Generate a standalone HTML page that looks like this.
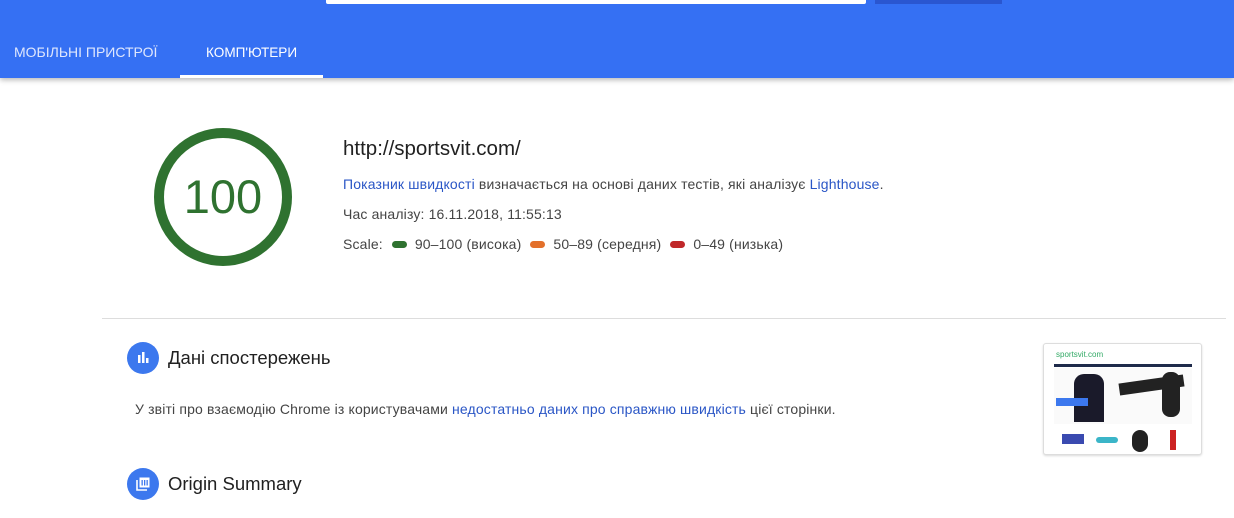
<!DOCTYPE html>
<html><head><meta charset="utf-8"><style>
body{margin:0;width:1234px;height:518px;overflow:hidden;background:#fff;font-family:"Liberation Sans",Arial,sans-serif;position:relative}
.hdr{position:absolute;left:0;top:0;width:1234px;height:78px;background:#3570f3;box-shadow:0 2px 5px rgba(0,0,0,.28)}
.abs{position:absolute}
.tab{position:absolute;top:44px;font-size:14px;color:#fff;white-space:nowrap}
.t{position:absolute;white-space:nowrap;font-size:14px;letter-spacing:.15px;color:#444}
a{color:#2a56c6;text-decoration:none}
.pill{display:inline-block;width:15px;height:7px;border-radius:4px;vertical-align:1px;margin:0 8px 0 9px}
.ic{position:absolute;width:32px;height:32px;border-radius:50%;background:#3c78ee}
</style></head><body>
<div class="hdr"></div>
<div class="abs" style="left:326px;top:0;width:540px;height:4px;background:#fff;border-radius:0 0 2px 2px"></div>
<div class="abs" style="left:875px;top:0;width:127px;height:4px;background:#2a56d0"></div>
<div class="tab" style="left:14px;color:#dfe7fd">МОБІЛЬНІ ПРИСТРОЇ</div>
<div class="tab" style="left:206px;transform:scaleX(.97);transform-origin:left">КОМП'ЮТЕРИ</div>
<div class="abs" style="left:180px;top:75px;width:143px;height:3px;background:#fff"></div>

<svg class="abs" style="left:150px;top:124px" width="146" height="146"><circle cx="73" cy="73" r="64" fill="none" stroke="#2f7230" stroke-width="10"/></svg>
<div class="abs" style="left:150px;top:170px;width:146px;text-align:center;font-size:47px;color:#2f7230;line-height:54px">100</div>

<div class="t" style="left:343px;top:137px;font-size:20.5px;letter-spacing:0;color:#212121">http://sportsvit.com/</div>
<div class="t" style="left:343px;top:176px"><a>Показник швидкості</a> визначається на основі даних тестів, які аналізує <a>Lighthouse</a>.</div>
<div class="t" style="left:343px;top:206px">Час аналізу: 16.11.2018, 11:55:13</div>
<div class="t" style="left:343px;top:236px">Scale:<span class="pill" style="background:#2f7230"></span>90–100 (висока)<span class="pill" style="background:#e3702b"></span>50–89 (середня)<span class="pill" style="background:#c0282a"></span>0–49 (низька)</div>

<div class="abs" style="left:102px;top:318px;width:1124px;height:1px;background:#ddd"></div>

<div class="ic" style="left:127px;top:342px"><svg width="32" height="32"><rect x="11" y="13" width="2.5" height="8" fill="#fff"/><rect x="15" y="10" width="2.5" height="11" fill="#fff"/><rect x="19" y="16" width="2.5" height="5" fill="#fff"/></svg></div>
<div class="t" style="left:168px;top:347px;font-size:18.5px;letter-spacing:0;color:#212121">Дані спостережень</div>
<div class="t" style="left:135px;top:401px">У звіті про взаємодію Chrome із користувачами <a>недостатньо даних про справжню швидкість</a> цієї сторінки.</div>

<div class="ic" style="left:127px;top:468px"><svg width="32" height="32"><path d="M10 12v10h10" fill="none" stroke="#fff" stroke-width="1.6"/><rect x="12.5" y="9.5" width="10" height="10" fill="#fff"/><rect x="14.5" y="12" width="1.3" height="5.5" fill="#3c78ee"/><rect x="17" y="12" width="1.3" height="5.5" fill="#3c78ee"/><rect x="19.5" y="12" width="1.3" height="5.5" fill="#3c78ee"/></svg></div>
<div class="t" style="left:168px;top:473px;font-size:18.5px;letter-spacing:0;color:#212121">Origin Summary</div>

<div class="abs" style="left:1043px;top:343px;width:157px;height:110px;border:1px solid #ddd;border-radius:3px;background:#fff;box-shadow:0 1px 2px rgba(0,0,0,.15);overflow:hidden">
 <div class="abs" style="left:12px;top:6px;font-size:8px;color:#3a6">sportsvit.com</div>
 <div class="abs" style="left:10px;top:20px;width:138px;height:3px;background:#1e2a4a"></div>
 <div class="abs" style="left:10px;top:24px;width:138px;height:56px;background:#fafafa"></div>
 <div class="abs" style="left:30px;top:30px;width:30px;height:48px;background:#1a1a2a;border-radius:10px 10px 0 0"></div>
 <div class="abs" style="left:75px;top:35px;width:65px;height:12px;background:#222;transform:rotate(-8deg)"></div>
 <div class="abs" style="left:118px;top:28px;width:18px;height:45px;background:#222;border-radius:8px"></div>
 <div class="abs" style="left:12px;top:54px;width:32px;height:8px;background:#3c78ee"></div>
 <div class="abs" style="left:18px;top:90px;width:22px;height:10px;background:#3a4ab0"></div>
 <div class="abs" style="left:52px;top:93px;width:22px;height:6px;background:#3bb5c8;border-radius:3px"></div>
 <div class="abs" style="left:88px;top:86px;width:16px;height:22px;background:#222;border-radius:8px"></div>
 <div class="abs" style="left:126px;top:86px;width:6px;height:20px;background:#c22"></div>
</div>
</body></html>
